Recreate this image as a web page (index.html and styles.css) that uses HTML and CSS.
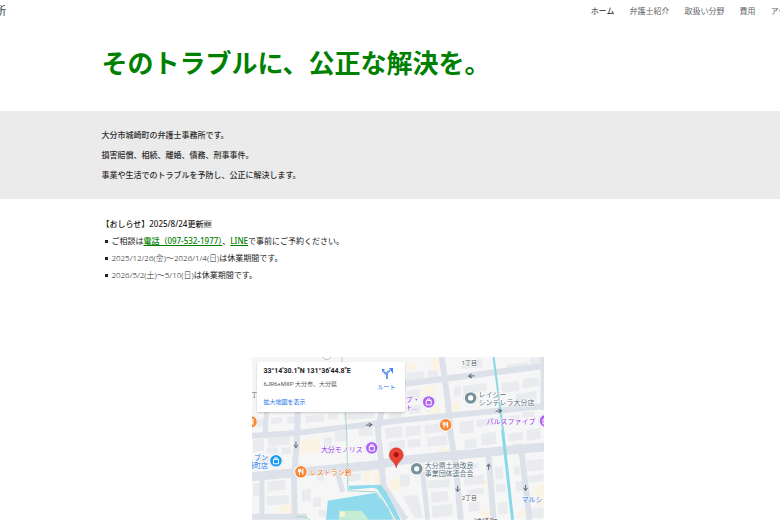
FILE: index.html
```html
<!DOCTYPE html>
<html lang="ja">
<head>
<meta charset="utf-8">
<title>弁護士事務所</title>
<link rel="stylesheet" href="styles.css">
</head>
<body>
<header class="site-header">
  <a class="brand" href="#">所</a>
  <nav class="site-nav">
    <a class="current" href="#">ホーム</a>
    <a href="#">弁護士紹介</a>
    <a href="#">取扱い分野</a>
    <a href="#">費用</a>
    <a href="#">アクセス</a>
  </nav>
</header>
<main>
  <section class="hero"><h1>そのトラブルに、公正な解決を。</h1></section>
  <section class="intro">
    <p>大分市城崎町の弁護士事務所です。</p>
    <p>損害賠償、相続、離婚、債務、刑事事件。</p>
    <p>事業や生活でのトラブルを予防し、公正に解決します。</p>
  </section>
  <section class="news">
    <h2>【おしらせ】2025/8/24更新🆕</h2>
    <ul>
      <li>ご相談は<a href="#">電話（097-532-1977）</a>、<a href="#">LINE</a>で事前にご予約ください。</li>
      <li><span class="date">2025/12/26(金)～2026/1/4(日)</span>は休業期間です。</li>
      <li><span class="date">2026/5/2(土)～5/10(日)</span>は休業期間です。</li>
    </ul>
  </section>
  <section class="map">
    <svg class="map-art" viewBox="251 357 293 163" preserveAspectRatio="xMidYMin slice">
      <defs>
        <g id="pin"><path d="M0 9C-2 6-7 5-7 0a7 7 0 0 1 14 0C7 5 2 6 0 9Z" fill="#fff" stroke="#d5d9df" stroke-width=".5"/><circle r="5.8" fill="currentColor"/></g>
        <g id="bag"><use href="#pin"/><path d="M-2.500-1.500h5v4.500h-5zM-1.200-1.500v-1.500h2.400v1.500" fill="none" stroke="#fff"/></g>
        <g id="fork"><use href="#pin"/><path d="M-2.500-3v3h2v-3M-1.500-3v6M2-3v6M2-3Q.5-2 1 1h1" fill="none" stroke="#fff"/></g>
        <g id="dot"><use href="#pin"/><circle r="2.600" fill="#fff"/></g>
        <path id="arrow" d="M-3 0h5M0-2l3 2-3 2" fill="none" stroke="#5f6872"/>
      </defs>
      <path fill="#f6f6f7" d="M251 357h293v163H251z"/>
      <g fill="#fbf3e4">
        <path d="M406 363l9-1v7l-9 1zM430 359l9-1 1 12-9 1zM449 375l8-1 1 7-8 1zM421 387l14-1v8l-14 1zM427 407l12-1 1 8-12 1zM450 403l9-1 1 8-8 1zM299 441l20-3v14l-20 3zM374 472l8-1 3 22-11 1zM363 469l7-1v14l-7 1zM277 506l15-1v9h-15zM388 480l12-2 3 12-13 2zM439 448l10-1v6l-10 1zM480 481l8-1v5l-8 1zM480 511l12-1v8l-11 1zM517 511l8-1v8h-8zM534 486l10-1v20l-9 1z"/>
      </g>
      <g fill="#e9ebee">
        <path d="M252 440l11-1v12l-11 1zM267 438l22-2v9l-22 2zM266 448l11-1v6l-11 1zM323 438l8-1v8l-8 1zM325 446l10-1v9l-10 1zM334 432l12-1v10l-12 1zM358 428l14-1v9l-14 1zM281 448l9-1v7l-9 1zM340 464l9-1v5l-9 1zM384 428l17-2 1 11-17 2zM405 427l15-2v10l-15 2zM424 425l18-2 1 9-19 2zM388 442l16-2v9l-16 2zM407 440l13-1v8l-13 1zM426 438l20-3 1 10-20 2z"/>
        <path d="M406 373l17-2v8l-17 2zM427 371l10-1v7l-10 1zM461 361l21-2v8l-21 2zM506 365l22-3v7l-21 2zM529 358l11-1v8l-10 1zM462 386l24-3v8l-23 3zM501 383l17-2 1 10-17 2zM522 379l16-2 1 9-17 2zM453 387l7-1v10l-7 1zM515 394l21-3v8l-20 3zM406 391l13-2v10l-13 1zM408 406l12-1v8l-12 1z"/>
        <path d="M459 422l14-2v13l-14 1zM476 420l16-2 1 7-17 2zM509 416l10-1v5l-10 1zM522 412l12-1v6l-12 1zM464 440l12-1v9l-12 1zM480 434l15-2 1 12-15 2zM507 434l15-2 1 8-15 2zM526 430l14-2v11l-14 2zM512 444l10-1v5l-10 1z"/>
        <path d="M266 482l18-2 1 10-18 2zM265 497l23-2v9l-22 2zM252 484l8-1v14h-8zM301 490l9-1v12l-9 1zM316 477l7-1v5h-7zM256 457l12-1v8l-12 1zM347 475l13-2v7l-13 2zM312 498l8-1v10h-8zM318 510h7v7h-7z"/>
        <path d="M399 475l10-1v12l-9 1zM427 481l22-2v8l-22 2zM430 493l17-2 1 10-17 2zM402 497l15-2 5 23h-8zM431 506l21-2v12l-20 2zM463 477l20-2 1 9-20 2zM467 490l16-2v6l-16 2zM468 503l11-1v9l-11 1zM494 468l8-1 1 12-8 1zM495 485l9-1 1 8-9 1zM497 503l10-1v12l-9 1zM513 467l6-1 1 9-6 1zM515 482l7-1v10l-7 1zM526 461l17-2v11l-16 2zM528 476l15-2v7l-15 2zM531 509l12-1v10h-12zM460 465l18-2v5l-18 2z"/>
        <path d="M252 420l11-1v7l-11 1zM270 418l11-1v6l-11 1zM286 417l10-1v7l-10 1zM305 416l18-2v7l-18 2zM327 414l10-1v6l-10 1zM343 413l31-1v6l-31 2zM388 413l13-1v6l-13 1z"/>
      </g>
      <g class="roads">
        <path class="wide" d="M251 477L378 465 395 461 544 447"/>
        <path class="mid" d="M251 436L297 433 405 420 544 406M395 385L544 366M441 357l6 43 3 35 5 28 5 57M297 405l-1 35-3 40 1 40M382 405l-5 25 6 57 22 33M251 517h55M543 357v53M488 455l5 65M521 451l8 69"/>
        <path class="thin" d="M261 478v40M336 471l6 21M422 472l5 48M266 405l-2 30"/>
      </g>
      <path d="M493 357l10 78" fill="none" stroke="#88d9e8" stroke-width="2"/>
      <path d="M502 430l10 90" fill="none" stroke="#88d9e8" stroke-width="3"/>
      <path d="M348 486l32-1 6 8 14 27h-5l-12-21-7-10-4-1-24 2z" fill="#90daee"/>
      <path d="M327 501l48-8 13 16 4 11h-67z" fill="#90daee"/>
      <path d="M338 511h23l7 9h-30z" fill="#c6ecd3"/>
      <path d="M339 512h5v5h-5z" fill="#f8f3d8"/>
      <path d="M341 357l5 78 1 56 28 1 5 5 13 23M295 517h9l5 3" fill="none" stroke="#a5d9c8"/>
      <g>
        <use href="#arrow" transform="translate(471 376) rotate(174)"/>
        <use href="#arrow" transform="translate(498 411) rotate(-6)"/>
        <use href="#arrow" transform="translate(368 425) rotate(-6)"/>
        <use href="#arrow" transform="translate(295 445) rotate(90)"/>
        <use href="#arrow" transform="translate(488 467) rotate(-90)"/>
        <use href="#arrow" transform="translate(457 489) rotate(90)"/>
        <use href="#arrow" transform="translate(525 488) rotate(90)"/>
      </g>
      <circle cx="326" cy="355" r="4.500" fill="#fff" stroke="#b4b9bf"/>
      <circle cx="446" cy="428" r="4" fill="#fff" stroke="#b4b9bf"/>
      <use href="#bag" x="428" y="402" color="#ae63f5"/>
      <use href="#bag" x="371" y="448" color="#ae63f5"/>
      <use href="#bag" x="545" y="421" color="#ae63f5"/>
      <use href="#bag" x="275" y="461" color="#1a9bf0"/>
      <use href="#fork" x="445" y="425" color="#fb8532"/>
      <use href="#fork" x="300" y="472" color="#fb8532"/>
      <use href="#fork" x="250" y="422" color="#fb8532"/>
      <use href="#dot" x="470" y="398" color="#78909c"/>
      <use href="#dot" x="416" y="469" color="#78909c"/>
      <path d="M395.500 468c-1-6-7-7.500-7-13a7 7 0 0 1 14 0c0 5.500-6 7-7 13z" fill="#ea4335" stroke="#c5221f" stroke-width=".5"/>
      <circle cx="395.500" cy="455" r="2.500" fill="#a50e0e"/>
      <g class="labels">
        <g class="purple"><text x="405" y="402">プ・</text><text x="405" y="410">ト…</text><text x="320" y="452">大分モノリス</text><text x="486" y="424">パルスファイブ</text></g>
        <g class="slate"><text x="478" y="397">レイジー</text><text x="478" y="405">シンデレラ大分店</text><text x="424" y="468">大分県土地改良</text><text x="424" y="476">事業団体連合会</text></g>
        <g class="orange"><text x="309" y="475">レストラン鈴</text></g>
        <g class="blue"><text x="267" y="460" text-anchor="end">ブン</text><text x="267" y="468" text-anchor="end">崎町店</text><text x="521" y="502">マルシ</text></g>
        <g class="gray"><text x="461" y="365">1丁目</text><text x="461" y="500">2丁目</text><text x="247" y="397">1丁</text><text class="area" x="473" y="525">城崎町</text></g>
      </g>
    </svg>
    <div class="map-card">
      <div>
        <h3>33°14'30.1"N 131°36'44.8"E</h3>
        <p>6JR6+MXP 大分市、大分県</p>
        <a href="#">拡大地図を表示</a>
      </div>
      <a class="route" href="#">
        <svg viewBox="0 0 12 12" width="12" height="12"><path d="M6 11V7L2 3M6 7V5l2-2h1" fill="none" stroke="#6aa0ee" stroke-width="2"/><path d="M8 0h4v6zM1 1h3L1 4z" fill="#4285f4"/></svg>
        <span>ルート</span>
      </a>
    </div>
  </section>
</main>
</body>
</html>
```
FILE: styles.css
```css
* { box-sizing: border-box; }
body {
  margin: 0;
  overflow-x: hidden;
  background: #fff;
  color: #212121;
  font: 8px/17px "Noto Sans", "Noto Sans CJK JP", sans-serif;
}
h1, h2, h3, p, ul { margin: 0; padding: 0; }
a { text-decoration: none; }
.site-header {
  display: flex;
  align-items: center;
  justify-content: space-between;
  height: 20px;
  margin: 0 -22px 0 -5px;
}
.brand { color: #444; font-size: 11px; }
.site-nav { display: flex; gap: 15px; }
.site-nav a { color: #666; }
.site-nav .current { color: #212121; }
.hero { padding: 24px 13% 28px; }
.hero h1 {
  color: #008000;
  font-size: 26px;
  line-height: 39px;
  font-weight: 700;
}
.intro {
  padding: 14px 13%;
  background: #ebebeb;
  color: #2b2b2b;
  font-weight: 500;
  line-height: 20px;
}
.news { padding: 16px 13% 0; }
.news h2 { font-size: 8px; font-weight: 500; }
.news ul { list-style: none; }
.news li { padding-left: 10px; }
.news li::before {
  content: "";
  float: left;
  width: 3px;
  height: 3px;
  margin: 8px 0 0 -6px;
  background: #212121;
}
.news a { color: #008000; font-weight: 500; text-decoration: underline; }
.date { color: #222; font-weight: 300; }
.map {
  position: relative;
  width: 37.5%;
  margin: 74px auto 0;
  left: 1%;
}
.map-art { display: block; width: 100%; }
.roads path { fill: none; stroke: #dce1ea; }
.roads .wide { stroke-width: 9px; }
.roads .mid { stroke-width: 6px; }
.roads .thin { stroke-width: 5px; }
.labels {
  font-family: Roboto, "Noto Sans CJK JP", sans-serif;
  font-size: 7px;
  stroke: #fff;
  stroke-width: 1px;
  paint-order: stroke;
}
.purple { fill: #9334e6; }
.slate { fill: #546e7a; }
.orange { fill: #e8710a; }
.blue { fill: #1a73e8; }
.gray { fill: #555; font-size: 6px; }
.area { font-size: 8px; }
.map-card {
  position: absolute;
  top: 5px;
  left: 5px;
  display: flex;
  justify-content: space-between;
  width: 148px;
  height: 50px;
  padding: 5px 9px 5px 7px;
  background: #fff;
  box-shadow: 0 1px 2px #0003;
  font: 6px/9px Roboto, "Noto Sans CJK JP", sans-serif;
}
.map-card h3 { font-size: 7px; line-height: 9px; font-weight: 700; white-space: nowrap; }
.map-card p { margin: 3px 0 9px; color: #555; }
.map-card a { display: block; color: #1a73e8; }
.map-card .route { text-align: center; }
.route svg { display: block; margin: 1px auto 2px; }
```
